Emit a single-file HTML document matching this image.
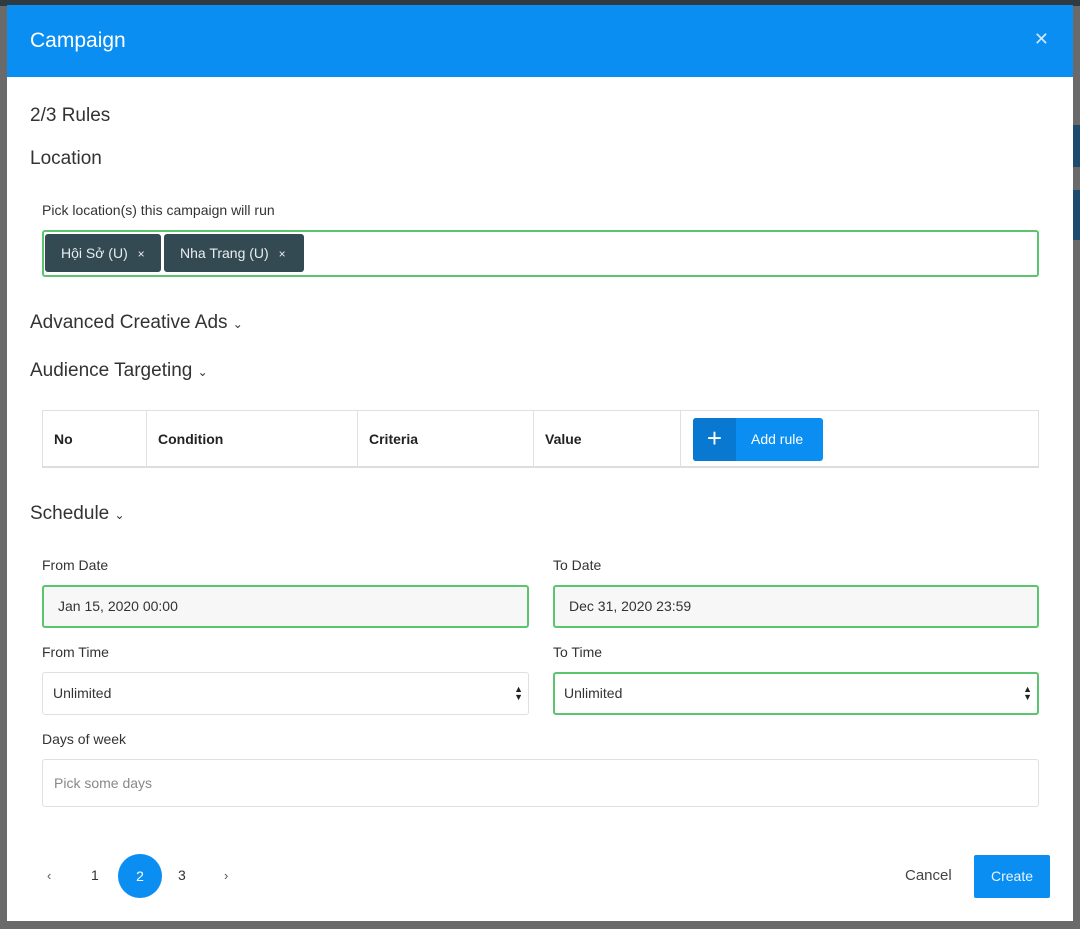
<!DOCTYPE html>
<html><head><meta charset="utf-8"><style>
*{box-sizing:border-box;margin:0;padding:0}
body{width:1080px;height:929px;background:#6a6a6a;font-family:"Liberation Sans",sans-serif;position:relative;overflow:hidden;color:#333}
.topbar{position:absolute;left:0;top:0;width:1080px;height:6px;background:#2f3b40}
.rs1{position:absolute;left:1073px;top:125px;width:7px;height:42px;background:#1e4a6e}
.rs2{position:absolute;left:1073px;top:190px;width:7px;height:50px;background:#1e4a6e}
.modal{position:absolute;left:7px;top:5px;width:1066px;height:916px;background:#fff}
.hdr{height:72px;background:#0a8ef2;color:#fff;font-size:21px;padding:24px 0 0 23px;position:relative}
.hdr .x{position:absolute;right:24px;top:24px;font-size:18px;color:#cfe6fb}
.abs{position:absolute}
h3{font-weight:normal;font-size:19px;color:#333}
.lbl{font-size:14px;color:#333}
.box{border:1px solid #e0e0e0;border-radius:3px;background:#fff}
.green{border:2px solid #5cc36f}
.tag{position:absolute;top:2px;height:38px;background:#344a52;color:#e8eef0;font-size:14px;border-radius:3px;padding:11px 0 0 16px}
.th{position:absolute;top:0;height:56px;border-right:1px solid #e0e0e0;font-size:14px;font-weight:bold;padding:20px 0 0 11px;color:#222}
.sel{font-size:14px;padding:12px 10px;color:#333}
.arr{position:absolute;right:5px;top:12px;font-size:9px;line-height:8px;color:#222}
</style></head><body>
<div class="topbar"></div><div class="rs1"></div><div class="rs2"></div>
<div class="modal">
<div class="hdr">Campaign<span class="x">✕</span></div>
<h3 class="abs" style="left:23px;top:100px">2/3 Rules</h3>
<h3 class="abs" style="left:23px;top:143px">Location</h3>
<div class="abs lbl" style="left:35px;top:197px">Pick location(s) this campaign will run</div>
<div class="abs green" style="left:35px;top:225px;width:997px;height:47px;border-radius:3px">
 <div class="tag" style="left:1px;width:116px">Hội Sở (U) <span style="margin-left:6px;font-size:12px">×</span></div>
 <div class="tag" style="left:120px;width:140px">Nha Trang (U) <span style="margin-left:6px;font-size:12px">×</span></div>
</div>
<h3 class="abs" style="left:23px;top:307px">Advanced Creative Ads <span style="font-size:12px">⌄</span></h3>
<h3 class="abs" style="left:23px;top:355px">Audience Targeting <span style="font-size:12px">⌄</span></h3>
<div class="abs" style="left:35px;top:405px;width:997px;height:58px;border:1px solid #e0e0e0;border-bottom:2px solid #ddd">
 <div class="th" style="left:0;width:104px">No</div>
 <div class="th" style="left:104px;width:211px">Condition</div>
 <div class="th" style="left:315px;width:176px">Criteria</div>
 <div class="th" style="left:491px;width:147px">Value</div>
 <div class="abs" style="left:650px;top:7px;width:130px;height:43px;background:#0a8ef2;border-radius:3px;color:#fff;font-size:14px">
  <div class="abs" style="left:0;top:0;width:43px;height:43px;background:#0878d0;border-radius:3px 0 0 3px;font-size:26px;text-align:center;line-height:41px">+</div>
  <div class="abs" style="left:58px;top:13px">Add rule</div>
 </div>
</div>
<h3 class="abs" style="left:23px;top:498px">Schedule <span style="font-size:12px">⌄</span></h3>
<div class="abs lbl" style="left:35px;top:552px">From Date</div>
<div class="abs lbl" style="left:546px;top:552px">To Date</div>
<div class="abs green sel" style="left:35px;top:580px;width:487px;height:43px;border-radius:3px;background:#f7f7f7;padding:11px 14px">Jan 15, 2020 00:00</div>
<div class="abs green sel" style="left:546px;top:580px;width:486px;height:43px;border-radius:3px;background:#f7f7f7;padding:11px 14px">Dec 31, 2020 23:59</div>
<div class="abs lbl" style="left:35px;top:639px">From Time</div>
<div class="abs lbl" style="left:546px;top:639px">To Time</div>
<div class="abs box sel" style="left:35px;top:667px;width:487px;height:43px">Unlimited<div class="arr">▲<br>▼</div></div>
<div class="abs green sel" style="left:546px;top:667px;width:486px;height:43px;border-radius:3px;padding:11px 9px">Unlimited<div class="arr" style="top:11px">▲<br>▼</div></div>
<div class="abs lbl" style="left:35px;top:726px">Days of week</div>
<div class="abs box" style="left:35px;top:754px;width:997px;height:48px;font-size:14px;color:#888;padding:15px 11px">Pick some days</div>
<div class="abs" style="left:40px;top:863px;font-size:13px;color:#555">‹</div>
<div class="abs" style="left:84px;top:862px;font-size:14px">1</div>
<div class="abs" style="left:111px;top:849px;width:44px;height:44px;border-radius:50%;background:#0a8ef2;color:#fff;font-size:14px;text-align:center;line-height:44px">2</div>
<div class="abs" style="left:171px;top:862px;font-size:14px">3</div>
<div class="abs" style="left:217px;top:863px;font-size:13px;color:#555">›</div>
<div class="abs" style="left:898px;top:862px;font-size:15px;color:#444">Cancel</div>
<div class="abs" style="left:967px;top:850px;width:76px;height:43px;background:#0a8ef2;border-radius:2px;color:#e8f4ff;font-size:14px;text-align:center;line-height:43px">Create</div>
</div>
</body></html>
